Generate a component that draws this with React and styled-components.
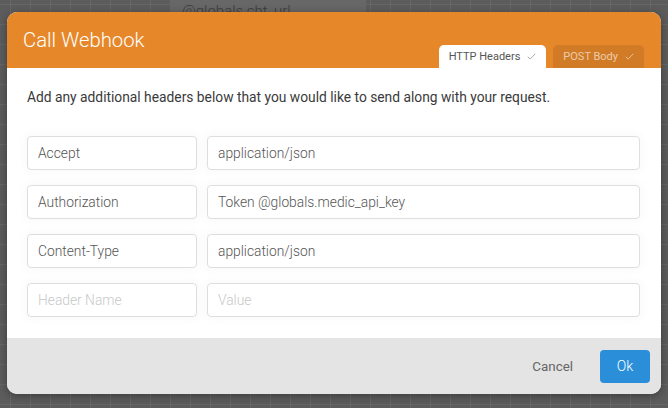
import React from 'react'
import styled, { createGlobalStyle } from 'styled-components'

const GlobalStyle = createGlobalStyle`
    body {
        margin: 0;
        font-family: Roboto, "Liberation Sans", sans-serif;
        font-weight: 300;
    }
`

const Canvas = styled.div`
    position: relative;
    width: 668px;
    height: 408px;
    box-sizing: border-box;
    padding: 12px 7px 14px;
    overflow: hidden;
    background-color: #5c5c5c;
    background-image:
        linear-gradient(to right, rgba(255, 255, 255, 0.06) 1px, transparent 1px),
        linear-gradient(to bottom, rgba(255, 255, 255, 0.06) 1px, transparent 1px);
    background-size: 20px 20px;
    background-position: 10px 4px;
`

const FlowNode = styled.div`
    position: absolute;
    left: 170px;
    top: -12px;
    width: 196px;
    height: 40px;
    box-sizing: border-box;
    padding: 14px 0 0 12px;
    background: #676767;
    color: #3b3b3b;
    font-size: 15px;
    line-height: 18px;
`

const Modal = styled.div`
    position: relative;
    display: flex;
    flex-direction: column;
    height: 382px;
    border-radius: 10px;
    overflow: hidden;
    background: #fff;
    box-shadow: 0 2px 8px rgba(0, 0, 0, 0.35);
`

const Header = styled.div`
    display: flex;
    justify-content: space-between;
    height: 56px;
    padding: 0 17px 0 16px;
    background: #e6882a;
`

const Title = styled.h1`
    margin: 0;
    padding-top: 16px;
    font-size: 20.3px;
    line-height: 24px;
    font-weight: 300;
    color: #fff;
`

const Tabs = styled.div`
    display: flex;
    align-items: flex-end;
    gap: 7px;
`

const Tab = styled.div`
    display: flex;
    align-items: center;
    gap: 7px;
    height: 23px;
    padding: 0 10px;
    border-radius: 5px 5px 0 0;
    font-size: 11px;
    font-weight: 400;
    line-height: 23px;
    background: ${p => (p.$active ? '#fff' : 'rgba(0, 0, 0, 0.09)')};
    color: ${p => (p.$active ? '#555' : 'rgba(255, 255, 255, 0.62)')};
`

const Check = ({ color }) => (
    <svg width="9" height="7" viewBox="0 0 9 7">
        <path d="M0.8 3.8 L3.2 6 L8.3 0.8" fill="none" stroke={color} strokeWidth="1" />
    </svg>
)

const Body = styled.div`
    flex: 1;
    padding: 19px 21px 0 20px;
`

const Intro = styled.p`
    margin: 0 0 29px;
    line-height: 20px;
    color: #3a3a3a;
    font-weight: 400;
    font-size: 13.8px;
`

const Rows = styled.div`
    display: flex;
    flex-direction: column;
    gap: 15px;
`

const Row = styled.div`
    display: grid;
    grid-template-columns: 170px 1fr;
    gap: 10px;
`

const Field = styled.input`
    box-sizing: border-box;
    width: 100%;
    height: 34px;
    padding: 0 10px;
    border: 1px solid #dedede;
    border-radius: 4px;
    font-family: Roboto, "Liberation Sans", sans-serif;
    font-weight: 300;
    font-size: 13.8px;
    color: #555;
    background: #fff;
    box-shadow: 0 0 10px 3px rgba(0, 0, 0, 0.025);
    outline: none;

    &::placeholder {
        color: #c8c8c8;
    }
`

const Footer = styled.div`
    display: flex;
    justify-content: flex-end;
    align-items: center;
    height: 56px;
    padding: 0 11px 0 0;
    box-sizing: border-box;
    background: #e4e4e4;
`

const Button = styled.button`
    height: 33px;
    border: none;
    border-radius: 4px;
    font-family: Roboto, "Liberation Sans", sans-serif;
    font-size: ${p => (p.$primary ? '14px' : '13.4px')};
    font-weight: ${p => (p.$primary ? 300 : 400)};
    cursor: pointer;
    background: ${p => (p.$primary ? '#2a8fd8' : 'transparent')};
    color: ${p => (p.$primary ? '#fff' : '#666')};
    padding: ${p => (p.$primary ? '0' : '0 27px 0 0')};
    width: ${p => (p.$primary ? '50px' : 'auto')};
`

const headers = [
    { name: 'Accept', value: 'application/json' },
    { name: 'Authorization', value: 'Token @globals.medic_api_key' },
    { name: 'Content-Type', value: 'application/json' },
    { name: '', value: '' },
]

const App = () => (
    <>
        <GlobalStyle />
        <Canvas>
            <FlowNode>@globals.cht_url</FlowNode>
            <Modal>
                <Header>
                    <Title>Call Webhook</Title>
                    <Tabs>
                        <Tab $active>
                            HTTP Headers <Check color="#aaa" />
                        </Tab>
                        <Tab>
                            POST Body <Check color="rgba(255,255,255,0.55)" />
                        </Tab>
                    </Tabs>
                </Header>
                <Body>
                    <Intro>Add any additional headers below that you would like to send along with your request.</Intro>
                    <Rows>
                        {headers.map((h, i) => (
                            <Row key={i}>
                                <Field defaultValue={h.name} placeholder="Header Name" />
                                <Field defaultValue={h.value} placeholder="Value" />
                            </Row>
                        ))}
                    </Rows>
                </Body>
                <Footer>
                    <Button>Cancel</Button>
                    <Button $primary>Ok</Button>
                </Footer>
            </Modal>
        </Canvas>
    </>
)

export default App
